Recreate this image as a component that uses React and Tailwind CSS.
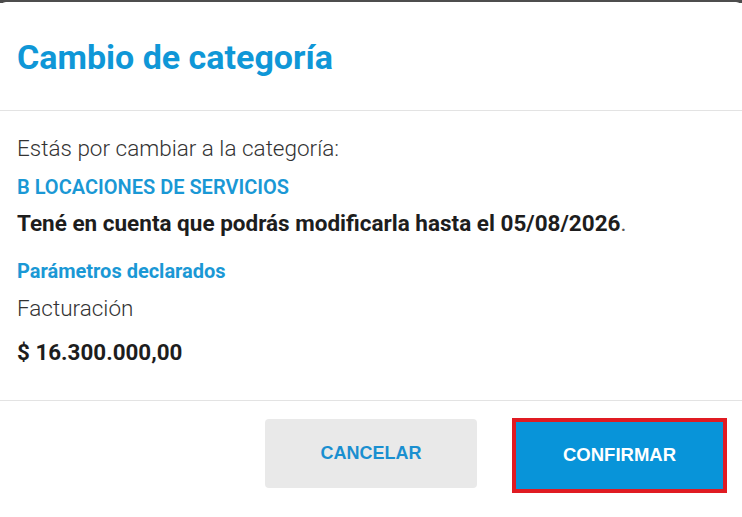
export default function App() {
  return (
    <div className="w-[742px] h-[517px] bg-white overflow-hidden relative" style={{ fontFamily: "Roboto, 'Liberation Sans', sans-serif" }}>
      <div className="h-[3px] bg-[#4d4d4d]" />
      <div className="bg-white rounded-t-[6px] -mt-[1px]">
        <div className="h-[109px] px-[17px] flex items-center border-b border-[#e3e3e3]">
          <h1 className="text-[34px] font-bold text-[#0f97d7] tracking-[0px] pt-[2px] leading-[40px]">Cambio de categoría</h1>
        </div>
        <div className="px-[17px] pt-[24px] h-[290px] border-b border-[#e3e3e3]">
          <p className="h-[26px] text-[22.5px] font-light text-[#333] leading-[26px]">Estás por cambiar a la categoría:</p>
          <p className="mt-[15px] h-[22px] text-[20px] font-semibold text-[#1a98d5] leading-[22px]">B LOCACIONES DE SERVICIOS</p>
          <p className="mt-[12px] h-[26px] text-[22.5px] font-bold text-[#1d1d1d] leading-[26px]">
            Tené en cuenta que podrás modificarla hasta el 05/08/2026<span className="font-normal text-[#555]">.</span>
          </p>
          <p className="mt-[24px] h-[22px] text-[20px] font-bold text-[#1a98d5] leading-[22px]">Parámetros declarados</p>
          <p className="mt-[13px] h-[26px] text-[22.5px] font-light text-[#333] leading-[26px]">Facturación</p>
          <p className="mt-[18px] h-[26px] text-[22.4px] font-bold text-[#1d1d1d] leading-[26px]">$ 16.300.000,00</p>
        </div>
        <div className="flex justify-end items-start gap-[35px] pr-[15px] pt-[18px]">
          <button className="w-[212px] h-[69px] rounded-[4px] bg-[#e9e9e9] text-[#1a8fd0] text-[18px] font-bold" style={{ fontFamily: "'Liberation Sans', Arial, sans-serif" }}>
            CANCELAR
          </button>
          <div className="border-[4px] border-[#e01b22] -mt-[1px]">
            <button className="block w-[207px] h-[67px] pb-[2px] bg-[#0894d9] text-white text-[18.5px] font-bold" style={{ fontFamily: "'Liberation Sans', Arial, sans-serif" }}>
              CONFIRMAR
            </button>
          </div>
        </div>
      </div>
    </div>
  );
}
